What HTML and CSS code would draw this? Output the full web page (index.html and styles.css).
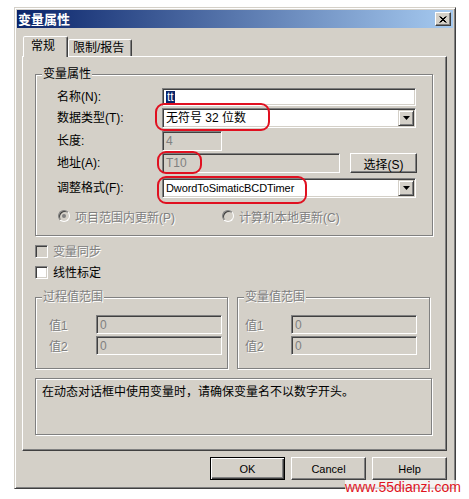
FILE: index.html
```html
<!DOCTYPE html>
<html>
<head>
<meta charset="utf-8">
<title>变量属性</title>
<link rel="stylesheet" href="styles.css">
</head>
<body>
<div class="window">
  <div class="titlebar">
    <span class="title">变量属性</span>
    <span class="close"><svg width="8" height="7" viewBox="0 0 8 7"><path d="M0.5 0.5L6.5 6.5M1.5 0.5L7.5 6.5M6.5 0.5L0.5 6.5M7.5 0.5L1.5 6.5" stroke="#000" stroke-width="1" fill="none"/></svg></span>
  </div>
  <div class="client">
    <div class="tabs">
      <div class="tab active">常规</div>
      <div class="tab other">限制/报告</div>
    </div>
    <div class="panel">
      <fieldset class="group g-main">
        <legend>变量属性</legend>
        <div class="gbody">
          <div class="row r1"><span class="lbl">名称(N):</span><div class="field w-full"><span class="hl">tt</span></div></div>
          <div class="row r2"><span class="lbl">数据类型(T):</span><div class="field w-full"><span class="val">无符号 32 位数</span><span class="ddb"><svg width="7" height="4" viewBox="0 0 7 4"><path d="M0 0H7L3.5 4Z" fill="#000"/></svg></span></div></div>
          <div class="row r3"><span class="lbl">长度:</span><div class="field dis w-len">4</div></div>
          <div class="row r4"><span class="lbl">地址(A):</span><div class="field dis w-addr">T10</div><span class="btn sel-btn">选择(S)</span></div>
          <div class="row r5"><span class="lbl">调整格式(F):</span><div class="field w-full"><span class="val latin">DwordToSimaticBCDTimer</span><span class="ddb"><svg width="7" height="4" viewBox="0 0 7 4"><path d="M0 0H7L3.5 4Z" fill="#000"/></svg></span></div></div>
          <div class="row r6">
            <div class="opt opt1"><span class="radio checked"></span><span class="dtext">项目范围内更新(P)</span></div>
            <div class="opt"><span class="radio"></span><span class="dtext">计算机本地更新(C)</span></div>
          </div>
        </div>
      </fieldset>

      <div class="chk-row first"><span class="chk dis"></span><span class="dtext">变量同步</span></div>
      <div class="chk-row"><span class="chk"></span><span>线性标定</span></div>

      <div class="ranges">
        <fieldset class="group g-range">
          <legend class="dtext">过程值范围</legend>
          <div class="rbody left">
            <div class="vrow"><span class="vlbl dtext">值1</span><div class="field dis w-val">0</div></div>
            <div class="vrow second"><span class="vlbl dtext">值2</span><div class="field dis w-val">0</div></div>
          </div>
        </fieldset>
        <fieldset class="group g-range">
          <legend class="dtext">变量值范围</legend>
          <div class="rbody right">
            <div class="vrow"><span class="vlbl r dtext">值1</span><div class="field dis w-val">0</div></div>
            <div class="vrow second"><span class="vlbl r dtext">值2</span><div class="field dis w-val">0</div></div>
          </div>
        </fieldset>
      </div>

      <div class="info">在动态对话框中使用变量时，请确保变量名不以数字开头。</div>
    </div>
    <div class="buttons">
      <span class="btn dlg default">OK</span>
      <span class="btn dlg">Cancel</span>
      <span class="btn dlg">Help</span>
    </div>
  </div>
</div>

<div class="mark m1"></div>
<div class="mark m2"></div>
<div class="mark m3"></div>
<div class="watermark">www.55dianzi.com</div>
</body>
</html>
```

FILE: styles.css
```css
html, body {
  margin: 0;
  padding: 0;
}
body {
  background: #fff;
  font-family: "Liberation Sans", "Noto Sans CJK SC", sans-serif;
  font-size: 12px;
  color: #000;
  position: relative;
  width: 469px;
  height: 499px;
  overflow: hidden;
}

.window {
  margin: 7px 0 0 14px;
  width: 442px;
  height: 482px;
  box-sizing: border-box;
  background: #d4d0c8;
  border: 1px solid;
  border-color: #d4d0c8 #404040 #404040 #d4d0c8;
  box-shadow: inset 1px 1px #fff, inset -1px -1px #808080;
  padding: 2px;
}

.titlebar {
  height: 18px;
  display: flex;
  align-items: center;
  justify-content: space-between;
  background: linear-gradient(to right, #0a246a, #a6caf0);
  padding: 0 2px 0 1px;
}
.title {
  color: #fff;
  font-weight: bold;
  font-size: 13px;
  line-height: 18px;
  font-family: "Noto Sans CJK SC", sans-serif;
}
.close {
  width: 16px;
  height: 14px;
  box-sizing: border-box;
  background: #d4d0c8;
  border: 1px solid;
  border-color: #fff #404040 #404040 #fff;
  box-shadow: inset -1px -1px #808080;
  display: flex;
  align-items: center;
  justify-content: center;
}

.client {
  padding: 8px 6px 0 5px;
}

.tabs {
  display: flex;
  height: 20px;
  align-items: flex-start;
  padding-left: 1px;
  position: relative;
  z-index: 1;
}
.tab {
  box-sizing: border-box;
  border: 1px solid;
  border-bottom: none;
  border-color: #fff #404040 transparent #fff;
  box-shadow: inset -1px 0 #808080;
  border-radius: 2px 2px 0 0;
  background: #d4d0c8;
  font-size: 12px;
}
.tab.active {
  width: 45px;
  height: 21px;
  line-height: 19px;
  padding-left: 7px;
}
.tab.other {
  width: 64px;
  height: 17px;
  margin-top: 3px;
  line-height: 16px;
  padding-left: 4px;
  border-left-color: #fff;
}

.panel {
  height: 395px;
  box-sizing: border-box;
  border: 1px solid;
  border-color: #fff #404040 #404040 #fff;
  box-shadow: inset -1px -1px #808080;
  padding: 10px 0 0 12px;
}

fieldset.group {
  margin: 0;
  padding: 0;
  min-width: 0;
  box-sizing: border-box;
  border: 1px solid #808080;
  box-shadow: inset 1px 1px #fff, 1px 1px #fff;
}
fieldset.group legend {
  margin-left: 6px;
  padding: 0 1px;
  font-size: 12px;
  line-height: 14px;
  background: #d4d0c8;
}
.g-main {
  width: 398px;
}
.gbody {
  padding: 7px 0 11px 21px;
}
.row {
  display: flex;
  align-items: center;
}
.lbl {
  width: 105px;
  line-height: 16px;
}
.r1 { height: 18px; }
.r2 { height: 20px; margin-top: 2px; }
.r3 { height: 20px; margin-top: 3px; }
.r4 { height: 20px; margin-top: 2px; }
.r5 { height: 20px; margin-top: 5px; }
.r6 { height: 16px; margin-top: 10px; }

.field {
  box-sizing: border-box;
  height: 100%;
  border: 1px solid;
  border-color: #808080 #fff #fff #808080;
  box-shadow: inset 1px 1px #404040, inset -1px -1px #d4d0c8;
  background: #fff;
  padding-left: 3px;
  display: flex;
  align-items: center;
  line-height: 14px;
}
.field.dis {
  background: #d4d0c8;
  color: #808080;
}
.w-full { width: 254px; }
.w-len { width: 60px; }
.w-addr { width: 178px; }
.w-val { width: 126px; }

.hl {
  background: #0a246a;
  color: #fff;
  padding: 0 1px;
  line-height: 13px;
}
.val {
  flex: 1;
}
.val.latin {
  font-size: 11px;
  letter-spacing: -0.1px;
}
.ddb {
  margin-right: 1px;
  width: 16px;
  height: 16px;
  box-sizing: border-box;
  border: 1px solid;
  border-color: #d4d0c8 #404040 #404040 #d4d0c8;
  box-shadow: inset 1px 1px #fff, inset -1px -1px #808080;
  background: #d4d0c8;
  display: flex;
  align-items: center;
  justify-content: center;
}

.btn {
  box-sizing: border-box;
  border: 1px solid;
  border-color: #fff #404040 #404040 #fff;
  box-shadow: inset -1px -1px #808080;
  background: #d4d0c8;
  display: flex;
  align-items: center;
  justify-content: center;
}
.sel-btn {
  margin-left: 10px;
  width: 67px;
  height: 20px;
}

.dtext {
  color: #808080;
  text-shadow: 1px 1px 0 #fff;
}
.opt {
  display: flex;
  align-items: center;
  gap: 5px;
}
.opt1 {
  width: 165px;
  padding-left: 1px;
  box-sizing: border-box;
}
.radio {
  width: 12px;
  height: 12px;
  box-sizing: border-box;
  border-radius: 50%;
  border: 1px solid;
  border-color: #808080 #fff #fff #808080;
  box-shadow: inset 1px 1px #404040;
  background: #d4d0c8;
  display: flex;
  align-items: center;
  justify-content: center;
}
.radio.checked::after {
  content: "";
  width: 4px;
  height: 4px;
  border-radius: 50%;
  background: #808080;
}

.chk-row {
  display: flex;
  align-items: center;
  gap: 5px;
  height: 13px;
  margin-top: 8px;
  line-height: 14px;
}
.chk-row.first {
  margin-top: 9px;
}
.chk {
  width: 13px;
  height: 13px;
  box-sizing: border-box;
  border: 1px solid;
  border-color: #808080 #fff #fff #808080;
  box-shadow: inset 1px 1px #404040, inset -1px -1px #d4d0c8;
  background: #fff;
}
.chk.dis {
  background: #d4d0c8;
}

.ranges {
  display: flex;
  gap: 9px;
  margin-top: 11px;
}
.g-range {
  width: 193px;
}
.rbody {
  padding: 11px 0 13px 13px;
}
.rbody.right {
  padding-left: 7px;
}
.vrow {
  display: flex;
  align-items: center;
  height: 19px;
}
.vrow.second {
  margin-top: 2px;
}
.vlbl {
  width: 47px;
}
.vlbl.r {
  width: 46px;
}

.info {
  margin-top: 9px;
  width: 397px;
  height: 57px;
  box-sizing: border-box;
  border: 1px solid #808080;
  box-shadow: inset 1px 1px #fff, 1px 1px #fff;
  padding: 5px 6px;
  line-height: 16px;
}

.buttons {
  display: flex;
  justify-content: flex-end;
  gap: 6px;
  margin-top: 6px;
}
.btn.dlg {
  width: 75px;
  height: 23px;
  font-size: 11px;
}
.btn.default {
  border-color: #000;
  box-shadow: inset 1px 1px #fff, inset -1px -1px #404040, inset -2px -2px #808080;
}

.mark {
  position: absolute;
  box-sizing: border-box;
  border: 2px solid #e01020;
  border-radius: 9px;
}
.m1 { left: 155px; top: 103px; width: 115px; height: 28px; }
.m2 { left: 157px; top: 151px; width: 45px; height: 23px; }
.m3 { left: 157px; top: 176px; width: 150px; height: 28px; }

.watermark {
  position: absolute;
  left: 345px;
  top: 480px;
  font-size: 14px;
  line-height: 14px;
  color: #e0141e;
  background: rgba(255, 255, 255, 0.75);
  font-family: "Liberation Sans", sans-serif;
}
```
